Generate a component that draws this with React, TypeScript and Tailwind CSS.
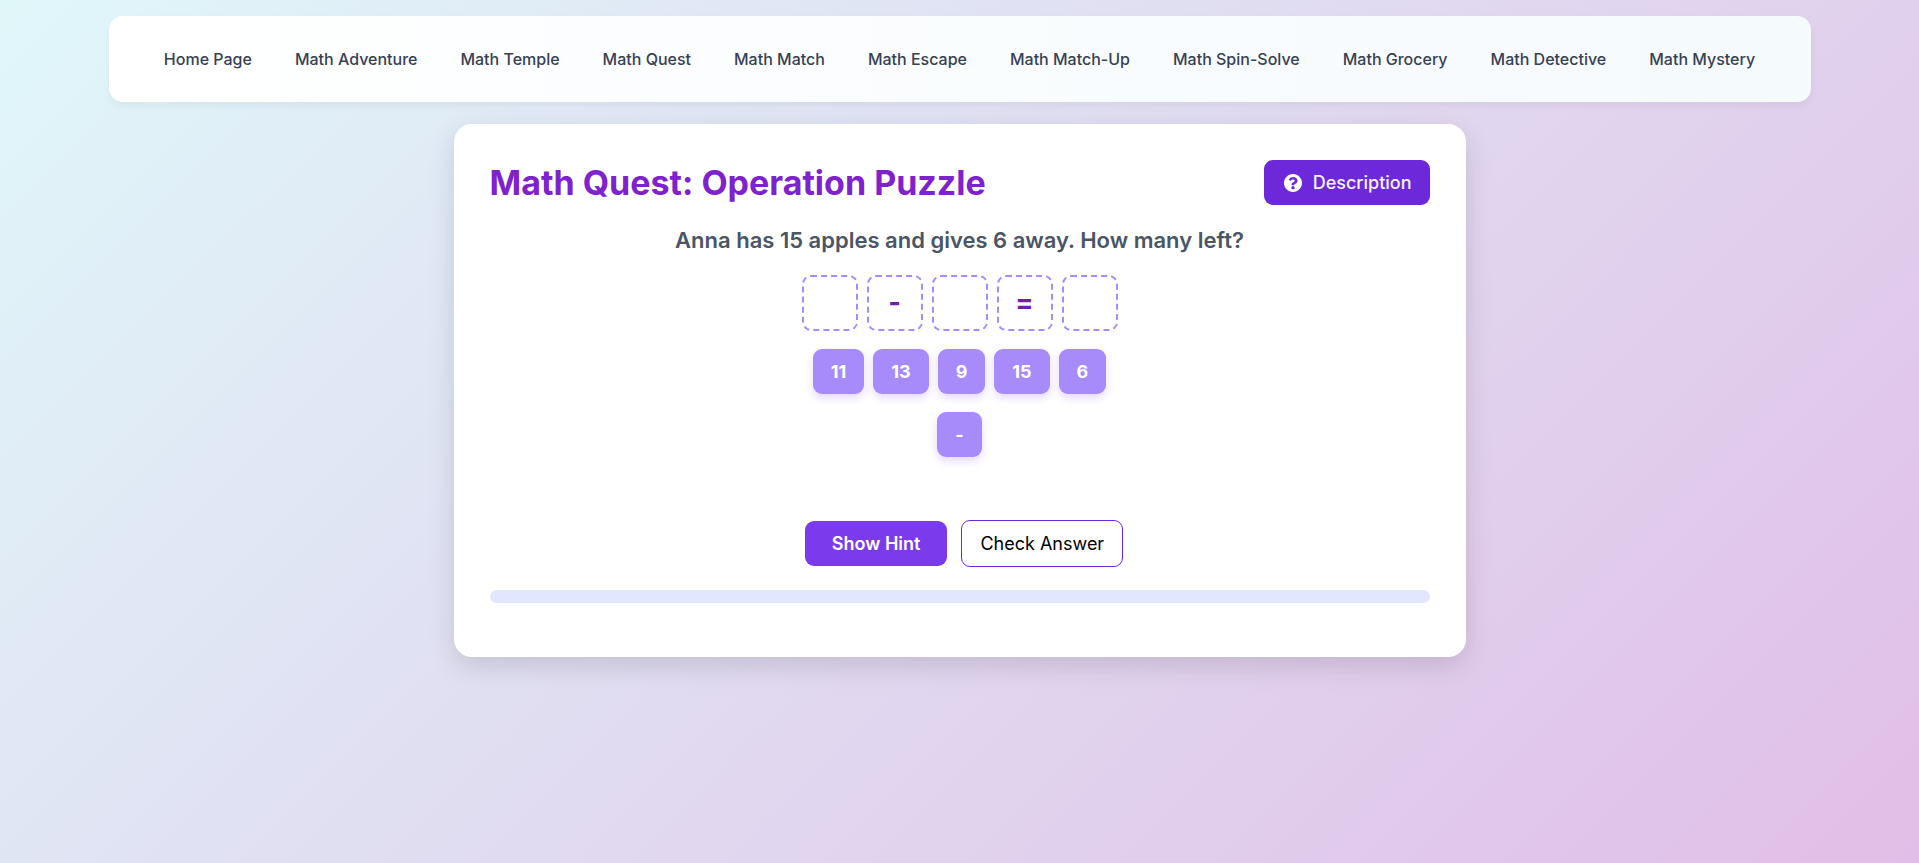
import React from 'react';

const links = [
  'Home Page', 'Math Adventure', 'Math Temple', 'Math Quest', 'Math Match', 'Math Escape',
  'Math Match-Up', 'Math Spin-Solve', 'Math Grocery', 'Math Detective', 'Math Mystery',
];
const slots = ['', '-', '', '=', ''];
const numbers = ['11', '13', '9', '15', '6'];

function Tile({ value }: { value: string }) {
  return (
    <button
      type="button"
      className="h-[45px] rounded-[9px] bg-[#a78bfa] px-[18px] text-lg leading-[27px] font-bold text-white shadow-[0_4px_8px_rgba(124,58,237,0.2)]"
    >
      {value}
    </button>
  );
}

export default function App() {
  return (
    <div className="min-h-screen bg-linear-[135deg,#e0f7fa,#e1bee7] px-4 py-4 font-['Inter',sans-serif]">
      <nav className="mx-auto flex h-[86px] max-w-[1702px] items-center justify-center gap-[43px] rounded-[14px] bg-linear-to-r from-white to-[#f5fafd] shadow-[0_4px_8px_rgba(0,0,0,0.05)]">
        {links.map((label) => (
          <a key={label} href="#" className="text-base font-medium whitespace-nowrap text-gray-700">
            {label}
          </a>
        ))}
      </nav>
      <main className="mx-auto mt-[22px] max-w-[1012px] rounded-[18px] bg-white p-9 pb-[54px] shadow-[0_9px_27px_rgba(0,0,0,0.13)]">
        <header className="flex items-center justify-between">
          <h1 className="text-[34px] leading-[45px] font-bold text-[#7e22ce]">Math Quest: Operation Puzzle</h1>
          <button type="button" className="flex h-[45px] items-center gap-[11px] rounded-[9px] bg-[#6d28d9] pr-[18px] pl-5 text-lg text-violet-50">
            <svg viewBox="8 8 496 496" className="size-[18px] text-white" fill="currentColor" aria-hidden="true">
              <path d="M504 256c0 137-111 248-248 248S8 393 8 256 119 8 256 8s248 111 248 248zM262.700 90c-54.500 0-89.300 23-116.500 63.800-3.500 5.300-2.400 12.400 2.700 16.300l34.700 26.300c5.200 3.900 12.600 3 16.700-2.100 17.900-22.700 30.100-35.800 57.300-35.800 20.400 0 45.700 13.100 45.700 33 0 15-12.400 22.700-32.500 34C247.100 238.500 216 255 216 296v8c0 6.600 5.400 12 12 12h56c6.600 0 12-5.400 12-12v-1.300c0-28.800 84.200-30 84.200-108 0-58.700-60.900-104.700-117.500-104.700zM256 338c-25.400 0-46 20.600-46 46s20.600 46 46 46 46-20.600 46-46-20.600-46-46-46z" />
            </svg>
            <span className="font-medium">Description</span>
          </button>
        </header>
        <p className="mt-[18px] text-center text-[22px] leading-[34px] font-semibold text-gray-600">
          Anna has 15 apples and gives 6 away. How many left?
        </p>
        <div className="mt-[18px] flex justify-center gap-[9px]">
          {slots.map((value, i) => (
            <div key={i} className="flex size-14 items-center justify-center rounded-[9px] border-2 border-dashed border-[#a78bfa] text-[27px] font-bold text-[#6b21a8]">
              {value}
            </div>
          ))}
        </div>
        <div className="mt-[18px] flex justify-center gap-[9px]">
          {numbers.map((value) => <Tile key={value} value={value} />)}
        </div>
        <div className="mt-[18px] flex justify-center"><Tile value="-" /></div>
        <div className="mt-[63px] flex items-center justify-center gap-[14px] pl-[9px]">
          <button type="button" className="h-[45px] rounded-[9px] bg-[#7c3aed] px-[27px] text-lg leading-[27px] font-semibold text-white">Show Hint</button>
          <button type="button" className="h-[47px] rounded-[9px] border border-[#6d28d9] px-[18px] text-lg leading-[27px] text-black">Check Answer</button>
        </div>
        <div className="mt-[23px] h-[13px] rounded-full bg-indigo-100" />
      </main>
    </div>
  );
}
